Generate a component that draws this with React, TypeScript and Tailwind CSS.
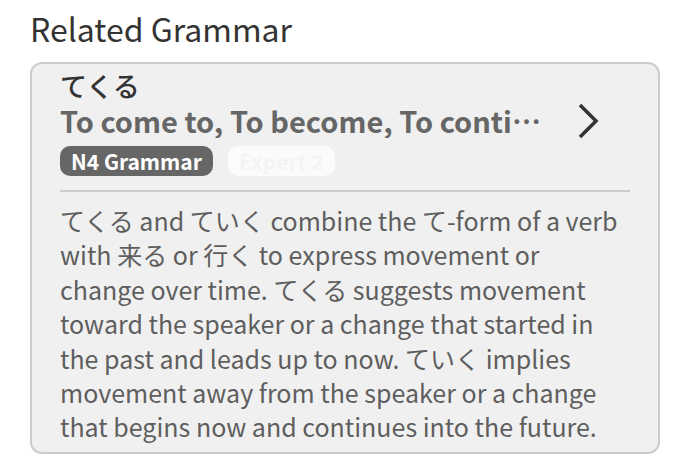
import * as React from 'react';

const font = { fontFamily: '"Noto Sans CJK JP", "Noto Sans", sans-serif' };

function Badge({ label, dark }: { label: string; dark?: boolean }) {
	return (
		<span
			className={
				dark
					? 'rounded-[10px] bg-[#666666] px-[11px] text-[21px] font-bold leading-[30px] text-white'
					: 'rounded-[10px] bg-[#fbfbfb] px-[11px] text-[21px] font-bold leading-[30px] text-[#f4f4f4]'
			}
		>
			{label}
		</span>
	);
}

export default function App() {
	return (
		<div className="h-[458px] w-[690px] overflow-hidden bg-white" style={font}>
			<div className="px-[30px] pt-[4px]">
				<h2 className="text-[32px] leading-[48px] text-[#333333]">Related Grammar</h2>
				<div className="mt-[10px] rounded-[12px] border-2 border-[#cccccc] bg-[#f0f0f0] px-[28px] pb-[8px] pt-[6px]">
					<div className="flex items-center">
						<div className="min-w-0 flex-1">
							<div className="text-[27px] font-medium leading-[32px] text-[#333333]">てくる</div>
							<div className="truncate text-[29px] font-bold leading-[36px] text-[#666666]">
								To come to, To become, To continue
							</div>
							<div className="mt-[8px] flex gap-[15px]">
								<Badge label="N4 Grammar" dark />
								<Badge label="Expert 2" />
							</div>
						</div>
						<div className="ml-[32px] mr-[31px] shrink-0 pb-[4px]">
							<svg width="22" height="36" viewBox="0 0 22 36" fill="none">
								<path d="M3 2 L19 18 L3 34" stroke="#333333" strokeWidth="3.5" />
							</svg>
						</div>
					</div>
					<div className="mt-[14px] h-[2px] bg-[#cccccc]" />
					<p className="mt-[11px] pr-[5px] text-[25px] leading-[34.4px] text-[#5e5e5e]">
						てくる and ていく combine the て-form of a verb with 来る or 行く to express movement or change over time. てくる suggests movement toward the speaker or a change that started in the past and leads up to now. ていく implies movement away from the speaker or a change that begins now and continues into the future.
					</p>
				</div>
			</div>
		</div>
	);
}
